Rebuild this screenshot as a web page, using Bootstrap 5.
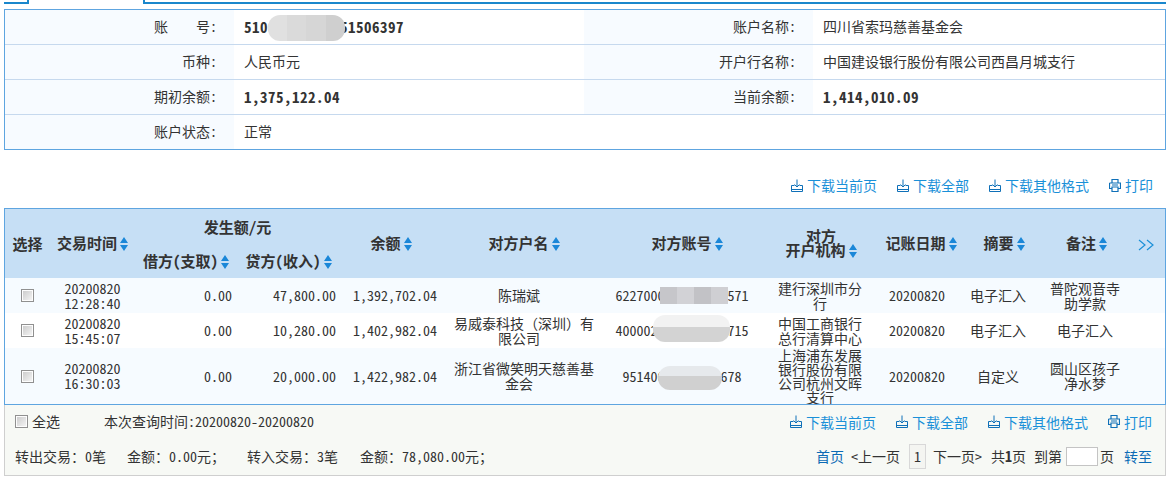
<!DOCTYPE html>
<html lang="zh">
<head>
<meta charset="utf-8">
<title>账户明细</title>
<link rel="stylesheet" href="https://cdn.jsdelivr.net/npm/bootstrap@5.3.0/dist/css/bootstrap.min.css">
<style>
html,body{height:477px;overflow:hidden}
body{background:#fff;color:#333;font:14px/15px "Noto Sans CJK SC","Noto Sans",sans-serif;font-feature-settings:"hwid";margin:0}
.fullw{font-feature-settings:normal}
.tabstrip{height:4px;margin-bottom:5px;display:flex;overflow:hidden}
.tab-a{width:25px;margin-left:4px;height:4px;border:solid #1a87cc;border-width:0 2px 2px 0}
.tab-b{flex:1;margin-left:114px;height:4px;border:solid #1a87cc;border-width:0 0 2px 2px}
.infobox{margin:0 0 0 4px;width:1162px;border:1px solid #5ea5e0;height:141px;display:grid;grid-template-columns:229px 350px 229px 1fr;grid-template-rows:35px 35px 35px 34px}
.infobox>div{display:flex;align-items:center;border-bottom:1px solid #c6d9ee;height:35px;position:relative;padding-bottom:2px}
.infobox>div:nth-last-child(-n+4){border-bottom:0;height:34px;padding-bottom:1px}
.lab{background:#f7fbff;justify-content:flex-end;padding-right:17px}
.val{padding-left:10px}
.strong-num{font-weight:700;font-size:15px;letter-spacing:.5px}
.patch{position:absolute;border-radius:12px;filter:blur(.6px)}
.p1{left:34px;top:5px;width:77px;height:26px;background:linear-gradient(90deg,#e0e0e0 0 25%,#dadada 25% 50%,#d6d6d6 50% 75%,#cfcfcf 75%)}
.p2{left:660px;top:287px;width:68px;height:17px;border-radius:0;background:linear-gradient(90deg,#c6c6ca 0 25%,#d2d2d6 25% 50%,#c2c2c6 50% 75%,#cfcfd3 75%)}
.p3{left:653px;top:315px;width:77px;height:27px;background:linear-gradient(180deg,#f2f2f2 0 45%,#d3d3d3 45%)}
.p4{left:658px;top:366px;width:64px;height:24px;background:linear-gradient(180deg,#e6e9ec 0 40%,#d0d0d0 40%)}
.tools{display:flex;justify-content:flex-end;gap:20px;padding-right:13px}
.toprow{margin-top:27px;height:31px;align-items:flex-start}
.linkx{display:inline-flex;align-items:center;gap:4px;color:#1a90d8;text-decoration:none;line-height:16px}
.linkx svg{width:12px;height:13px;flex:none}
.tablewrap{margin-left:4px;width:1162px;border:1px solid #5ea5e0;height:197px;overflow:hidden}
.datat{table-layout:fixed;margin:0;width:1160px;--bs-table-bg:transparent;--bs-table-color:#333;color:#333}
.datat th,.datat td{padding:0;border:0;text-align:center;vertical-align:middle;line-height:15px;font-size:14px}
.datat thead th{background:#c6dff5;font-weight:700;font-size:15px;line-height:14px}
.datat thead tr:first-child{height:35px}
.datat thead tr:last-child{height:34px}
.datat tbody tr{height:35px}
.datat tbody tr.tall{height:56px}
.datat tbody tr:nth-child(odd) td{background:#f6fbff}
.datat tbody tr:nth-child(even) td{background:#fff}
.rt{text-align:right!important}
.pr1{padding-right:5px!important}
.pr2{padding-right:4px!important}
.pr3{padding-right:5px!important}
.wrapbox{white-space:nowrap;width:130px;margin:0 auto;text-align:center}
.wrapbox2{white-space:nowrap;width:84px;margin:0 auto;text-align:center}
.tall .wrapbox2{line-height:14px}
.datat thead th.offa{padding-left:10px}
.datat thead th.offb{padding-left:2px}
.datat thead th.offc{padding-left:8px}
.datat thead th.offd{padding-left:12px}
.datat thead th.offe{padding-left:3px}
.sort{display:inline-block;width:8px;height:14px;margin-left:3px;vertical-align:-2px}
.tick{appearance:none;-webkit-appearance:none;display:block;width:13px;height:13px;margin:0;border:1px solid #909090;background:linear-gradient(135deg,#c9c9c9,#f7f7f7);box-shadow:inset 0 0 0 1px #fdfdfd}
.datat .tick{margin-left:16px}
.morei{width:17px;height:12px;margin-right:8px}
.footbox{margin-left:4px;width:1162px;background:#f7f9f5;border:solid #cfcfcf;border-width:0 1px 1px 1px;height:71px;color:#333}
.frow1,.frow2{display:flex;justify-content:space-between;align-items:center;height:35px;padding:0 13px 2px 10px}
.leftinfo{display:flex;align-items:center}
.gapa{margin-left:4px}
.gapb{margin-left:44px}
.sum1{width:112px}.sum2{width:120px}.sum3{width:113px}
.pager{display:flex;align-items:center}
.pageno{display:inline-flex;align-items:center;justify-content:center;width:17px;height:25px;border:1px solid #d8d8d8;margin:0 7px 0 9px;background:#f4f5f1}
.pagein{width:32px;height:19px;border:1px solid #c4c4c4;background:#fff;margin:0 2px 0 4px;padding:0}
.pglink{color:#0c6bb5;text-decoration:none}
.gap10{margin-left:10px}
.gap9{margin-left:9px}
.gap7{margin-left:7px}
</style>
</head>
<body>
<div class="tabstrip"><div class="tab-a"></div><div class="tab-b"></div></div>

<div class="infobox">
  <div class="lab">账<span class="fullw">&emsp;&emsp;</span>号:</div>
  <div class="val strong-num">510<span>000000000</span>51506397<span class="patch p1"></span></div>
  <div class="lab">账户名称:</div>
  <div class="val">四川省索玛慈善基金会</div>
  <div class="lab">币种:</div>
  <div class="val">人民币元</div>
  <div class="lab">开户行名称:</div>
  <div class="val">中国建设银行股份有限公司西昌月城支行</div>
  <div class="lab">期初余额:</div>
  <div class="val strong-num">1,375,122.04</div>
  <div class="lab">当前余额:</div>
  <div class="val strong-num">1,414,010.09</div>
  <div class="lab">账户状态:</div>
  <div class="val">正常</div>
  <div></div>
  <div></div>
</div>

<svg width="0" height="0" class="position-absolute">
  <symbol id="sorti" viewBox="0 0 8 14"><path d="M4 0 8 6H0Z M0 8H8L4 14Z" fill="#1a87d8"/></symbol>
  <symbol id="dl" viewBox="0 0 12 13"><path d="M6 .5V8M3.500 5.500 6 8l2.500-2.500M3.500 6.500H.5v6h11v-6h-3M.5 10.500h11" fill="none" stroke="#0f70b8" stroke-width="1"/></symbol>
  <symbol id="pr" viewBox="0 0 12 13"><path d="M3 4V.5h6V4M.5 4h11v5.500H9M3 9.500H.5V4M3 8h6v4.500H3ZM3 6h6" fill="none" stroke="#0f70b8" stroke-width="1.200"/></symbol>
  <symbol id="mr" viewBox="0 0 17 12"><path d="M1 1l6 5-6 5M9 1l6 5-6 5" fill="none" stroke="#1a90d8" stroke-width="1.200"/></symbol>
</svg>

<div class="tools toprow">
  <a class="linkx" href="#"><svg><use href="#dl"/></svg>下载当前页</a>
  <a class="linkx" href="#"><svg><use href="#dl"/></svg>下载全部</a>
  <a class="linkx" href="#"><svg><use href="#dl"/></svg>下载其他格式</a>
  <a class="linkx" href="#"><svg><use href="#pr"/></svg>打印</a>
</div>

<div class="tablewrap">
<table class="table datat">
  <colgroup>
    <col style="width:45px"><col style="width:85px"><col style="width:102px"><col style="width:103px"><col style="width:102px"><col style="width:154px"><col style="width:172px"><col style="width:104px"><col style="width:90px"><col style="width:72px"><col style="width:102px"><col style="width:29px">
  </colgroup>
  <thead>
    <tr>
      <th rowspan="2">选择</th>
      <th rowspan="2">交易时间<svg class="sort"><use href="#sorti"/></svg></th>
      <th colspan="2">发生额/元</th>
      <th rowspan="2">余额<svg class="sort"><use href="#sorti"/></svg></th>
      <th rowspan="2" class="offa">对方户名<svg class="sort"><use href="#sorti"/></svg></th>
      <th rowspan="2" class="offa">对方账号<svg class="sort"><use href="#sorti"/></svg></th>
      <th rowspan="2" class="offb">对方<br>开户机构<svg class="sort"><use href="#sorti"/></svg></th>
      <th rowspan="2" class="offc">记账日期<svg class="sort"><use href="#sorti"/></svg></th>
      <th rowspan="2" class="offd">摘要<svg class="sort"><use href="#sorti"/></svg></th>
      <th rowspan="2" class="offe">备注<svg class="sort"><use href="#sorti"/></svg></th>
      <th rowspan="2"><svg class="morei"><use href="#mr"/></svg></th>
    </tr>
    <tr>
      <th>借方(支取)<svg class="sort"><use href="#sorti"/></svg></th>
      <th>贷方(收入)<svg class="sort"><use href="#sorti"/></svg></th>
    </tr>
  </thead>
  <tbody>
    <tr>
      <td><input class="tick" type="checkbox"></td>
      <td>20200820<br>12:28:40</td>
      <td class="rt pr1">0.00</td>
      <td class="rt pr2">47,800.00</td>
      <td class="rt pr3">1,392,702.04</td>
      <td><div class="wrapbox">陈瑞斌</div></td>
      <td>6227000000000000571</td>
      <td><div class="wrapbox2">建行深圳市分<br>行</div></td>
      <td>20200820</td>
      <td>电子汇入</td>
      <td>普陀观音寺<br>助学款</td>
      <td></td>
    </tr>
    <tr>
      <td><input class="tick" type="checkbox"></td>
      <td>20200820<br>15:45:07</td>
      <td class="rt pr1">0.00</td>
      <td class="rt pr2">10,280.00</td>
      <td class="rt pr3">1,402,982.04</td>
      <td><div class="wrapbox">易威泰科技<span class="fullw">（深圳）</span>有<br>限公司</div></td>
      <td>4000020000000000715</td>
      <td><div class="wrapbox2">中国工商银行<br>总行清算中心</div></td>
      <td>20200820</td>
      <td>电子汇入</td>
      <td>电子汇入</td>
      <td></td>
    </tr>
    <tr class="tall">
      <td><input class="tick" type="checkbox"></td>
      <td>20200820<br>16:30:03</td>
      <td class="rt pr1">0.00</td>
      <td class="rt pr2">20,000.00</td>
      <td class="rt pr3">1,422,982.04</td>
      <td><div class="wrapbox">浙江省微笑明天慈善基<br>金会</div></td>
      <td>95140000000000678</td>
      <td><div class="wrapbox2">上海浦东发展<br>银行股份有限<br>公司杭州文晖<br>支行</div></td>
      <td>20200820</td>
      <td>自定义</td>
      <td>圆山区孩子<br>净水梦</td>
      <td></td>
    </tr>
  </tbody>
</table>
</div>
<span class="patch p2"></span><span class="patch p3"></span><span class="patch p4"></span>

<div class="footbox">
  <div class="frow1">
    <div class="leftinfo"><input class="tick" type="checkbox"><span class="gapa">全选</span><span class="gapb">本次查询时间:20200820-20200820</span></div>
    <div class="tools p-0">
      <a class="linkx" href="#"><svg><use href="#dl"/></svg>下载当前页</a>
      <a class="linkx" href="#"><svg><use href="#dl"/></svg>下载全部</a>
      <a class="linkx" href="#"><svg><use href="#dl"/></svg>下载其他格式</a>
      <a class="linkx" href="#"><svg><use href="#pr"/></svg>打印</a>
    </div>
  </div>
  <div class="frow2">
    <div class="leftinfo"><span class="sum1">转出交易：0笔</span><span class="sum2">金额：0.00元；</span><span class="sum3">转入交易：3笔</span><span>金额：78,080.00元；</span></div>
    <div class="pager">
      <a class="pglink" href="#">首页</a>
      <span class="gap7">&lt;上一页</span>
      <span class="pageno">1</span>
      <span>下一页&gt;</span>
      <span class="gap9">共<b>1</b>页</span>
      <span class="ms-2">到第</span>
      <input class="pagein" type="text" aria-label="页码">
      <span>页</span>
      <a class="pglink gap10" href="#">转至</a>
    </div>
  </div>
</div>
<script src="https://cdn.jsdelivr.net/npm/bootstrap@5.3.0/dist/js/bootstrap.bundle.min.js"></script>
</body>
</html>
